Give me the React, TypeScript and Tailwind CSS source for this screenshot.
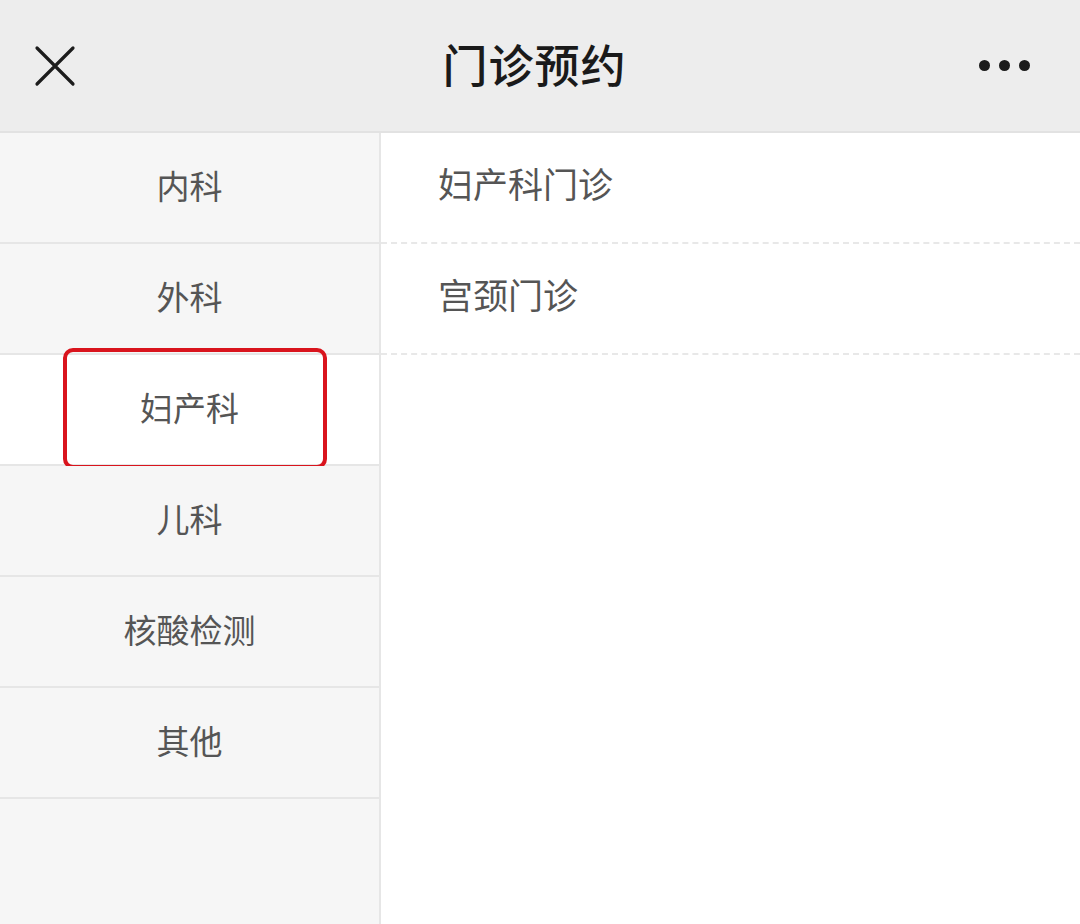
import { useState } from "react"

const departments = ["内科", "外科", "妇产科", "儿科", "核酸检测", "其他"]

const clinics: Record<string, string[]> = {
    "内科": ["内科门诊"],
    "外科": ["外科门诊"],
    "妇产科": ["妇产科门诊", "宫颈门诊"],
    "儿科": ["儿科门诊"],
    "核酸检测": ["核酸检测"],
    "其他": ["其他门诊"],
}

const font = { fontFamily: '"Noto Sans CJK SC", "Noto Sans", sans-serif' }

export default function App() {
    const [active, setActive] = useState("妇产科")

    return (
        <div className="w-[1080px] h-[924px] flex flex-col bg-white overflow-hidden" style={font}>

            {/* 顶部标题栏 */}
            <header className="h-[133px] shrink-0 bg-[#ededed] border-b-2 border-[#e2e2e2] flex items-center justify-between px-[34px]">
                <svg width="42" height="42" viewBox="0 0 42 42" className="text-[#1c1c1c]">
                    <path d="M3 3 L39 39 M39 3 L3 39" stroke="currentColor" strokeWidth="3.2" strokeLinecap="round" />
                </svg>
                <h1 className="text-[45px] font-medium text-[#1a1a1a] tracking-[1px] -mt-1 ml-[14px]">门诊预约</h1>
                <div className="flex gap-[9px] items-center pr-[16px]">
                    <span className="w-[11px] h-[11px] rounded-full bg-[#1c1c1c]" />
                    <span className="w-[11px] h-[11px] rounded-full bg-[#1c1c1c]" />
                    <span className="w-[11px] h-[11px] rounded-full bg-[#1c1c1c]" />
                </div>
            </header>

            <div className="flex flex-1 min-h-0">

                {/* 左侧科室 */}
                <nav className="w-[381px] shrink-0 bg-[#f6f6f6] border-r-2 border-[#e6e6e6]">
                    {departments.map((dep) => (
                        <button
                            key={dep}
                            onClick={() => setActive(dep)}
                            className={`relative w-full h-[111px] flex items-center justify-center border-b-2 border-[#e6e6e6] text-[33px] text-[#555] ${active === dep ? "bg-white" : "bg-[#f6f6f6]"}`}
                        >
                            {active === dep && (
                                <span className="absolute left-[63px] top-[-7px] w-[264px] h-[121px] rounded-[10px] border-[4px] border-[#d9141d]" />
                            )}
                            <span className="relative -mt-1">{dep}</span>
                        </button>
                    ))}
                </nav>

                {/* 右侧门诊 */}
                <div className="flex-1">
                    {clinics[active].map((c) => (
                        <div
                            key={c}
                            className="h-[111px] flex items-center pl-[57px] border-b-2 border-dashed border-[#e8e8e8] text-[35px] text-[#555]"
                        >
                            <span className="-mt-2">{c}</span>
                        </div>
                    ))}
                </div>
            </div>
        </div>
    )
}
